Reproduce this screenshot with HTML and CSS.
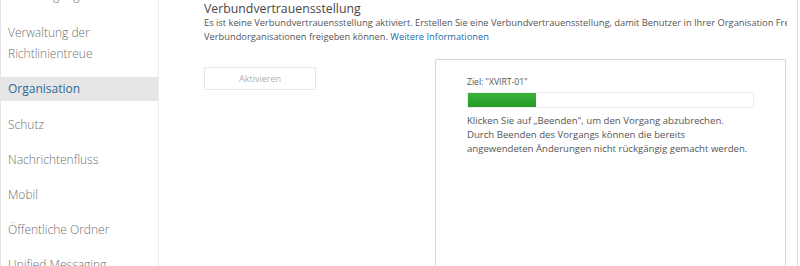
FILE: index.html
```html
<!DOCTYPE html>
<html lang="de">
<head>
<meta charset="utf-8">
<link rel="stylesheet" href="styles.css">
</head>
<body>
<div class="page">
  <nav class="sidebar">
    <div class="item top">Berechtigungen</div>
    <div class="item two">Verwaltung der<br>Richtlinientreue</div>
    <div class="item selected">Organisation</div>
    <div class="item">Schutz</div>
    <div class="item">Nachrichtenfluss</div>
    <div class="item">Mobil</div>
    <div class="item">Öffentliche Ordner</div>
    <div class="item">Unified Messaging</div>
  </nav>
  <main class="main">
    <h1 class="title">Verbundvertrauensstellung</h1>
    <p class="desc">Es ist keine Verbundvertrauensstellung aktiviert. Erstellen Sie eine Verbundvertrauensstellung, damit Benutzer in Ihrer Organisation Frei/Gebucht-Informationen<br>Verbundorganisationen freigeben können. <a class="link">Weitere Informationen</a></p>
    <div class="row">
      <div class="btn">Aktivieren</div>
      <div class="dialog">
        <div class="target">Ziel: "XVIRT-01"</div>
        <div class="bar"><div class="fill" style="width:24%"></div></div>
        <p class="note">Klicken Sie auf „Beenden", um den Vorgang abzubrechen.<br>Durch Beenden des Vorgangs können die bereits<br>angewendeten Änderungen nicht rückgängig gemacht werden.</p>
      </div>
    </div>
  </main>
  <div class="edge"></div>
</div>
</body>
</html>
```
FILE: styles.css
```css
html, body {
  margin: 0;
  padding: 0;
  background: #fff;
  overflow: hidden;
}
body {
  width: 800px;
  height: 266px;
  font-family: "Open Sans", "Noto Sans", sans-serif;
  color: #555;
}
.page {
  display: flex;
  height: 266px;
  overflow: hidden;
}
.sidebar {
  width: 157px;
  flex: none;
  border-left: 1px solid #e4e4e4;
  border-right: 1px solid #ececec;
  display: flex;
  flex-direction: column;
  margin-top: -22px;
}
.item {
  font-size: 12px;
  line-height: 21px;
  padding: 7px 0 7px 7px;
  color: #707070;
  font-weight: 300;
  white-space: nowrap;
  flex: none;
}
.item.two {
  padding-top: 9px;
  padding-bottom: 9px;
}
.item.selected {
  background: #e6e6e6;
  color: #2d6894;
  padding: 1px 0 2px 7px;
  margin: 4px 0 6px;
  font-weight: 400;
}
.main {
  flex: 1;
  padding: 2px 0 0 45px;
  overflow: hidden;
  min-width: 0;
}
.title {
  margin: 0;
  font-size: 12.3px;
  font-weight: 400;
  line-height: 14px;
  color: #484848;
}
.desc {
  margin: 0;
  font-size: 9.3px;
  line-height: 14px;
  color: #555;
  white-space: nowrap;
}
.link {
  color: #1c6aa8;
}
.row {
  display: flex;
  margin-top: 23px;
}
.btn {
  width: 110px;
  height: 21px;
  border: 1px solid #e8e8e8;
  font-size: 9px;
  line-height: 21px;
  text-align: center;
  color: #b0b0b0;
  flex: none;
}
.dialog {
  margin-left: 119px;
  margin-top: -8px;
  width: 318px;
  height: 220px;
  border: 1px solid #d6d6d6;
  border-radius: 2px;
  padding: 16px 0 0 31px;
  flex: none;
}
.target {
  font-size: 8.6px;
  line-height: 12px;
  color: #555;
}
.bar {
  margin-top: 4px;
  width: 285px;
  height: 14px;
  border: 1px solid #ececec;
  display: flex;
}
.fill {
  background: linear-gradient(#3cb43c, #249a24);
  height: 100%;
}
.note {
  margin: 6px 0 0;
  font-size: 9.6px;
  line-height: 14px;
  color: #555;
  white-space: nowrap;
}
.edge {
  width: 2px;
  flex: none;
  border-left: 1px solid #dcdcdc;
  margin-left: 10px;
}
```
